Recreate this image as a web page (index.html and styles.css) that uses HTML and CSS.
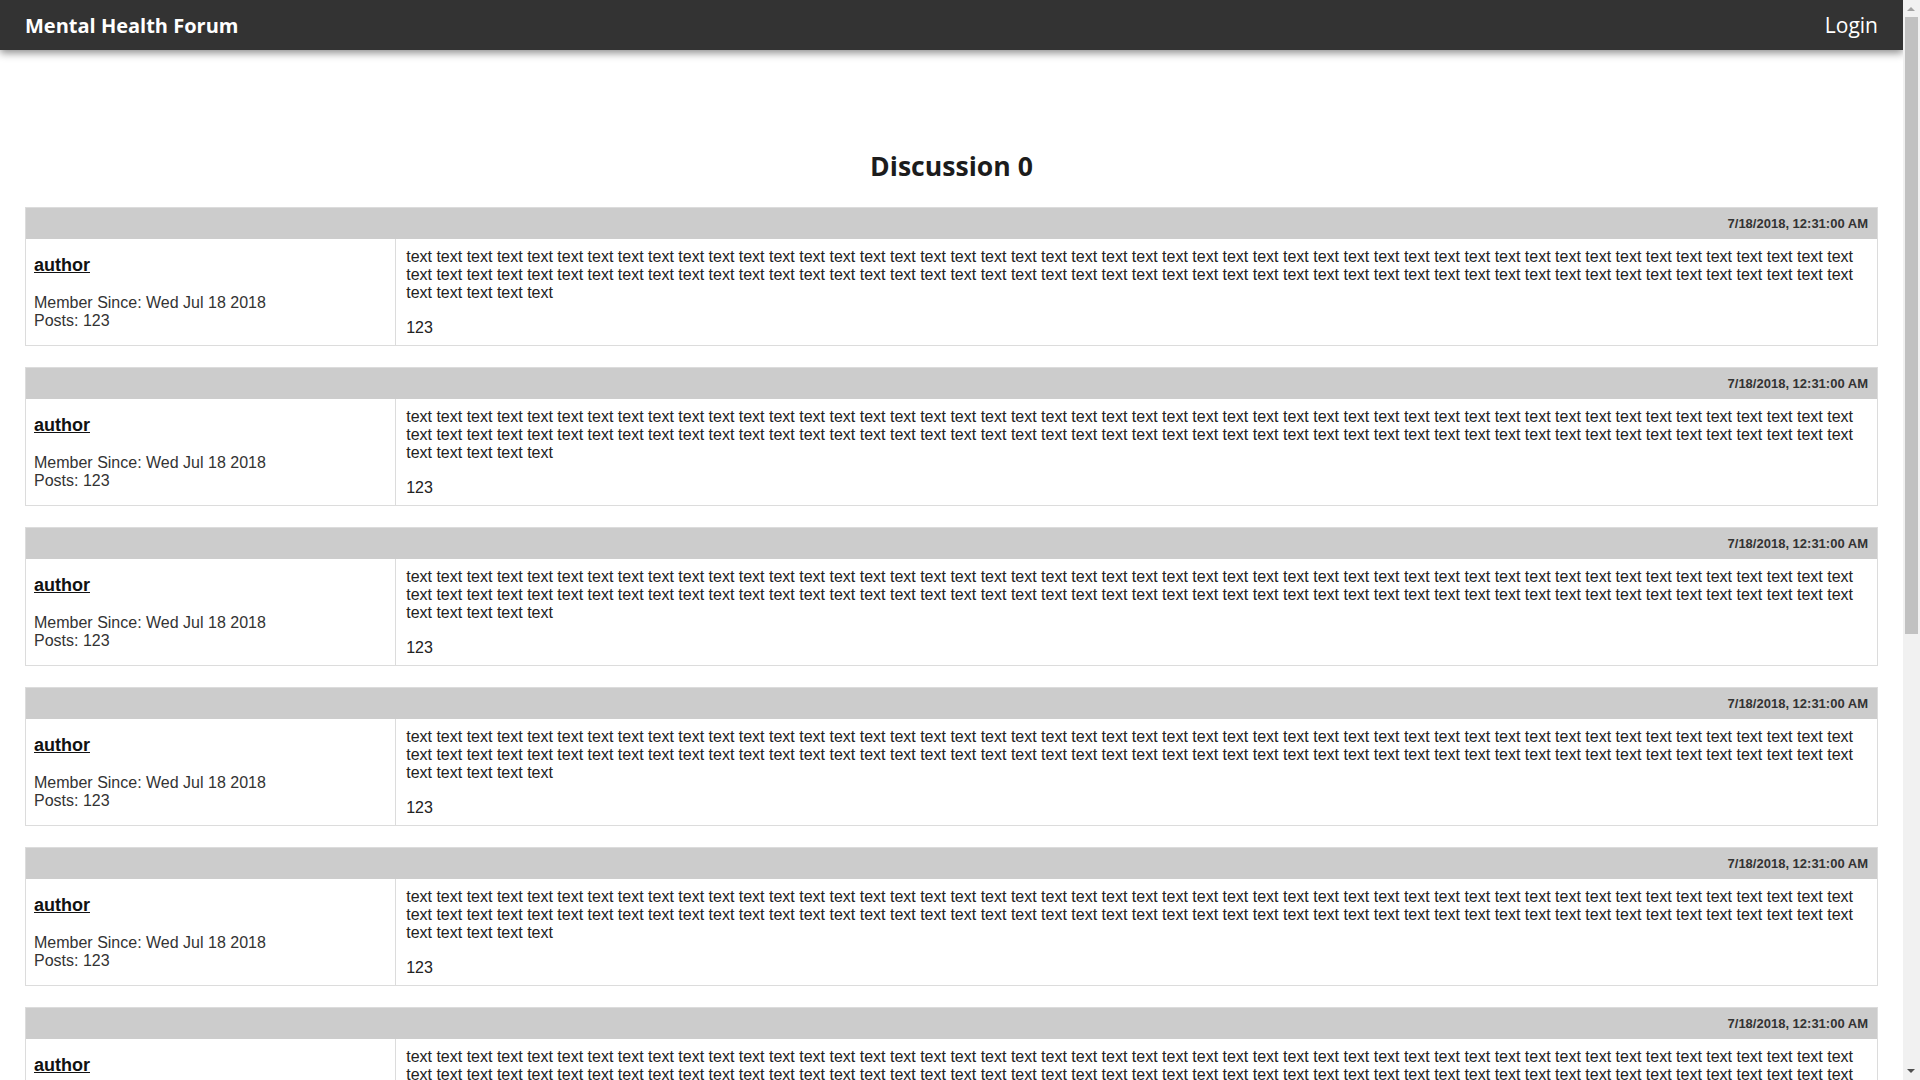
FILE: index.html
```html
<!DOCTYPE html>
<html lang="en">
<head>
<meta charset="utf-8">
<title>Mental Health Forum</title>
<link rel="stylesheet" href="styles.css">
</head>
<body>
<header class="topbar">
  <span class="brand">Mental Health Forum</span>
  <span class="login">Login</span>
</header>
<main class="main">
  <h1 class="title">Discussion 0</h1>

  <article class="post">
    <div class="post-head">7/18/2018, 12:31:00 AM</div>
    <div class="post-body">
      <div class="author-cell">
        <a class="author-name" href="#">author</a>
        <div class="meta">Member Since: Wed Jul 18 2018</div>
        <div class="meta">Posts: 123</div>
      </div>
      <div class="content-cell">
        <p>text text text text text text text text text text text text text text text text text text text text text text text text text text text text text text text text text text text text text text text text text text text text text text text text text text text text text text text text text text text text text text text text text text text text text text text text text text text text text text text text text text text text text text text text text text text text text text text text text text text text text</p>
        <p class="count">123</p>
      </div>
    </div>
  </article>

  <article class="post">
    <div class="post-head">7/18/2018, 12:31:00 AM</div>
    <div class="post-body">
      <div class="author-cell">
        <a class="author-name" href="#">author</a>
        <div class="meta">Member Since: Wed Jul 18 2018</div>
        <div class="meta">Posts: 123</div>
      </div>
      <div class="content-cell">
        <p>text text text text text text text text text text text text text text text text text text text text text text text text text text text text text text text text text text text text text text text text text text text text text text text text text text text text text text text text text text text text text text text text text text text text text text text text text text text text text text text text text text text text text text text text text text text text text text text text text text text text text</p>
        <p class="count">123</p>
      </div>
    </div>
  </article>

  <article class="post">
    <div class="post-head">7/18/2018, 12:31:00 AM</div>
    <div class="post-body">
      <div class="author-cell">
        <a class="author-name" href="#">author</a>
        <div class="meta">Member Since: Wed Jul 18 2018</div>
        <div class="meta">Posts: 123</div>
      </div>
      <div class="content-cell">
        <p>text text text text text text text text text text text text text text text text text text text text text text text text text text text text text text text text text text text text text text text text text text text text text text text text text text text text text text text text text text text text text text text text text text text text text text text text text text text text text text text text text text text text text text text text text text text text text text text text text text text text text</p>
        <p class="count">123</p>
      </div>
    </div>
  </article>

  <article class="post">
    <div class="post-head">7/18/2018, 12:31:00 AM</div>
    <div class="post-body">
      <div class="author-cell">
        <a class="author-name" href="#">author</a>
        <div class="meta">Member Since: Wed Jul 18 2018</div>
        <div class="meta">Posts: 123</div>
      </div>
      <div class="content-cell">
        <p>text text text text text text text text text text text text text text text text text text text text text text text text text text text text text text text text text text text text text text text text text text text text text text text text text text text text text text text text text text text text text text text text text text text text text text text text text text text text text text text text text text text text text text text text text text text text text text text text text text text text text</p>
        <p class="count">123</p>
      </div>
    </div>
  </article>

  <article class="post">
    <div class="post-head">7/18/2018, 12:31:00 AM</div>
    <div class="post-body">
      <div class="author-cell">
        <a class="author-name" href="#">author</a>
        <div class="meta">Member Since: Wed Jul 18 2018</div>
        <div class="meta">Posts: 123</div>
      </div>
      <div class="content-cell">
        <p>text text text text text text text text text text text text text text text text text text text text text text text text text text text text text text text text text text text text text text text text text text text text text text text text text text text text text text text text text text text text text text text text text text text text text text text text text text text text text text text text text text text text text text text text text text text text text text text text text text text text text</p>
        <p class="count">123</p>
      </div>
    </div>
  </article>

  <article class="post">
    <div class="post-head">7/18/2018, 12:31:00 AM</div>
    <div class="post-body">
      <div class="author-cell">
        <a class="author-name" href="#">author</a>
        <div class="meta">Member Since: Wed Jul 18 2018</div>
        <div class="meta">Posts: 123</div>
      </div>
      <div class="content-cell">
        <p>text text text text text text text text text text text text text text text text text text text text text text text text text text text text text text text text text text text text text text text text text text text text text text text text text text text text text text text text text text text text text text text text text text text text text text text text text text text text text text text text text text text text text text text text text text text text text text text text text text text text text</p>
        <p class="count">123</p>
      </div>
    </div>
  </article>

  <article class="post">
    <div class="post-head">7/18/2018, 12:31:00 AM</div>
    <div class="post-body">
      <div class="author-cell">
        <a class="author-name" href="#">author</a>
        <div class="meta">Member Since: Wed Jul 18 2018</div>
        <div class="meta">Posts: 123</div>
      </div>
      <div class="content-cell">
        <p>text text text text text text text text text text text text text text text text text text text text text text text text text text text text text text text text text text text text text text text text text text text text text text text text text text text text text text text text text text text text text text text text text text text text text text text text text text text text text text text text text text text text text text text text text text text text text text text text text text text text text</p>
        <p class="count">123</p>
      </div>
    </div>
  </article>

  <article class="post">
    <div class="post-head">7/18/2018, 12:31:00 AM</div>
    <div class="post-body">
      <div class="author-cell">
        <a class="author-name" href="#">author</a>
        <div class="meta">Member Since: Wed Jul 18 2018</div>
        <div class="meta">Posts: 123</div>
      </div>
      <div class="content-cell">
        <p>text text text text text text text text text text text text text text text text text text text text text text text text text text text text text text text text text text text text text text text text text text text text text text text text text text text text text text text text text text text text text text text text text text text text text text text text text text text text text text text text text text text text text text text text text text text text text text text text text text text text text</p>
        <p class="count">123</p>
      </div>
    </div>
  </article>

  <article class="post">
    <div class="post-head">7/18/2018, 12:31:00 AM</div>
    <div class="post-body">
      <div class="author-cell">
        <a class="author-name" href="#">author</a>
        <div class="meta">Member Since: Wed Jul 18 2018</div>
        <div class="meta">Posts: 123</div>
      </div>
      <div class="content-cell">
        <p>text text text text text text text text text text text text text text text text text text text text text text text text text text text text text text text text text text text text text text text text text text text text text text text text text text text text text text text text text text text text text text text text text text text text text text text text text text text text text text text text text text text text text text text text text text text text text text text text text text text text text</p>
        <p class="count">123</p>
      </div>
    </div>
  </article>

  <article class="post">
    <div class="post-head">7/18/2018, 12:31:00 AM</div>
    <div class="post-body">
      <div class="author-cell">
        <a class="author-name" href="#">author</a>
        <div class="meta">Member Since: Wed Jul 18 2018</div>
        <div class="meta">Posts: 123</div>
      </div>
      <div class="content-cell">
        <p>text text text text text text text text text text text text text text text text text text text text text text text text text text text text text text text text text text text text text text text text text text text text text text text text text text text text text text text text text text text text text text text text text text text text text text text text text text text text text text text text text text text text text text text text text text text text text text text text text text text text text</p>
        <p class="count">123</p>
      </div>
    </div>
  </article>
</main>

<div class="scrollbar" aria-hidden="true">
  <span class="arrow arrow-up"></span>
  <span class="thumb"></span>
  <span class="arrow arrow-down"></span>
</div>
</body>
</html>
```
FILE: styles.css
```css
* {
  box-sizing: border-box;
}

html,
body {
  margin: 0;
  padding: 0;
}

body {
  margin-right: 17px;
  font-family: "Liberation Sans", Arial, sans-serif;
  color: #222;
  background: #fff;
}

/* top bar */
.topbar {
  position: relative;
  z-index: 1;
  height: 50px;
  padding: 0 25px;
  display: flex;
  align-items: center;
  justify-content: space-between;
  background: #333;
  color: #fff;
  font-family: "Open Sans", "Noto Sans", sans-serif;
  box-shadow: 0 3px 8px rgba(0, 0, 0, 0.45);
}

.brand {
  font-size: 20px;
  font-weight: 700;
}

.login {
  font-size: 21px;
  font-weight: 400;
}

/* main */
.main {
  padding: 98px 25px 24px;
}

.title {
  margin: 0 0 23px;
  font-family: "Open Sans", "Noto Sans", sans-serif;
  font-size: 26.6px;
  line-height: 36px;
  font-weight: 700;
  text-align: center;
  color: #1c1c1c;
}

/* posts */
.post {
  border: 1px solid #dcdcdc;
  margin-bottom: 21px;
}

.post-head {
  height: 31px;
  padding: 0 9px;
  display: flex;
  align-items: center;
  justify-content: flex-end;
  background: #cccccc;
  font-size: 13px;
  font-weight: 700;
  color: #333;
}

.post-body {
  display: flex;
}

.author-cell {
  width: 20%;
  flex: none;
  padding: 8px;
  border-right: 1px solid #dcdcdc;
}

.author-name {
  display: block;
  margin: 8px 0 18px;
  font-size: 18px;
  font-weight: 700;
  color: #111;
  text-decoration: underline;
}

.meta {
  font-size: 16px;
  color: #333;
}

.content-cell {
  flex: 1;
  min-width: 0;
  padding: 9px 9px 8px 10px;
  font-size: 16px;
}

.content-cell p {
  margin: 0;
}

.content-cell .count {
  margin-top: 17px;
}

/* window scrollbar drawn over the right edge, as in the reference */
.scrollbar {
  position: fixed;
  top: 0;
  right: 0;
  width: 17px;
  height: 100vh;
  background: #f1f1f1;
}

.thumb {
  position: absolute;
  top: 17px;
  left: 2px;
  right: 2px;
  height: 617px;
  background: #c1c1c1;
}

.arrow {
  position: absolute;
  left: 4px;
  width: 0;
  height: 0;
  border-left: 4px solid transparent;
  border-right: 4px solid transparent;
}

.arrow-up {
  top: 7px;
  border-bottom: 4px solid #a3a3a3;
}

.arrow-down {
  bottom: 7px;
  border-top: 4px solid #505050;
}
```
